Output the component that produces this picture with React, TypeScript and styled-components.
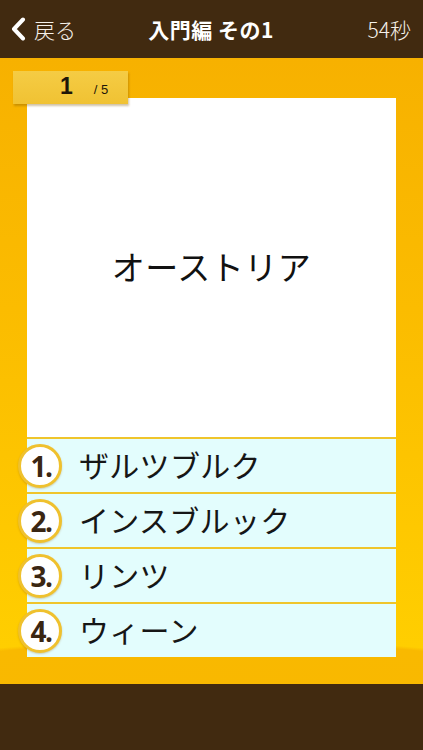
import styled, { createGlobalStyle } from "styled-components";

const GlobalStyle = createGlobalStyle`
  html, body {
    margin: 0;
    padding: 0;
  }
  body {
    font-family: "Noto Sans CJK JP", "Noto Sans", sans-serif;
  }
`

const Screen = styled.div`
  width: 423px;
  height: 750px;
  display: flex;
  flex-direction: column;
  overflow: hidden;
`

const Header = styled.header`
  height: 58px;
  flex-shrink: 0;
  background-color: #412a10;
  display: grid;
  grid-template-columns: 1fr auto 1fr;
  align-items: center;
  padding: 0 12px 0 11px;
  color: #fff;
`

const BackButton = styled.div`
  display: flex;
  align-items: center;
  gap: 8px;
  font-size: 21px;
  font-weight: 300;
  color: #f6f1ea;
`

const Title = styled.div`
  font-size: 21px;
  font-weight: 700;
  letter-spacing: 0.5px;
`

const Timer = styled.div`
  justify-self: end;
  font-size: 21px;
  font-weight: 300;
  color: #f6f1ea;
`

const Board = styled.main`
  flex: 1;
  display: flex;
  flex-direction: column;
  padding: 40px 27px 27px;
  background:
    radial-gradient(ellipse 560px 70px at 50% 100%, #f9b800 0%, #f9b900 60%, rgba(249, 185, 0, 0) 64%),
    linear-gradient(to bottom, #f7b100 0%, #fbbc00 40%, #fec800 75%, #ffd000 100%);
`

const Card = styled.section`
  position: relative;
  flex: 1;
  display: flex;
  flex-direction: column;
`

const Counter = styled.div`
  position: absolute;
  top: -27px;
  left: -14px;
  width: 115px;
  height: 33px;
  background: linear-gradient(to bottom, #f5cc44, #f0c233);
  box-shadow: 1px 2px 2px rgba(120, 80, 0, 0.35);
  display: flex;
  align-items: baseline;
  padding: 2px 0 0 47px;
  box-sizing: border-box;
  gap: 21px;
  color: #1e1608;
  font-family: "Liberation Sans", Arial, sans-serif;
  z-index: 1;
`

const Current = styled.span`
  font-size: 23px;
  font-weight: 700;
`

const Total = styled.span`
  font-size: 13px;
`

const Question = styled.div`
  flex: 1;
  background: #fff;
  display: flex;
  align-items: center;
  justify-content: center;
  padding-bottom: 4px;
  font-size: 33px;
  color: #111;
  letter-spacing: 0.5px;
`

const Option = styled.div`
  height: 53px;
  border-top: 2px solid #efc52c;
  background: #e3fdfd;
  display: flex;
  align-items: center;
  gap: 17px;
`

const Number = styled.div`
  width: 44px;
  height: 44px;
  margin-left: -9px;
  box-sizing: border-box;
  border-radius: 50%;
  background: #fff;
  border: 3px solid #efc12e;
  box-shadow: 0 1px 2px rgba(150, 100, 0, 0.3);
  display: flex;
  align-items: center;
  justify-content: center;
  padding-left: 2px;
  font-family: "Open Sans", sans-serif;
  font-weight: 700;
  font-size: 28px;
  color: #3a2612;
  letter-spacing: -1.5px;
  flex-shrink: 0;
`

const Answer = styled.span`
  font-size: 30px;
  color: #161616;
  letter-spacing: 0.3px;
  margin-bottom: 3px;
`

const Footer = styled.footer`
  height: 66px;
  flex-shrink: 0;
  background-color: #412a10;
`

const options = ["ザルツブルク", "インスブルック", "リンツ", "ウィーン"]

export default function App() {
  return (
    <Screen>
      <GlobalStyle />
      <Header>
        <BackButton>
          <svg width="15" height="24" viewBox="0 0 15 24">
            <path d="M12 2.5 L3 12 L12 21.5" fill="none" stroke="#fff" strokeWidth="4" strokeLinecap="round" strokeLinejoin="round" />
          </svg>
          戻る
        </BackButton>
        <Title>入門編 その1</Title>
        <Timer>54秒</Timer>
      </Header>
      <Board>
        <Card>
          <Counter>
            <Current>1</Current>
            <Total>/ 5</Total>
          </Counter>
          <Question>オーストリア</Question>
          {options.map((text, i) => (
            <Option key={text}>
              <Number>{i + 1}.</Number>
              <Answer>{text}</Answer>
            </Option>
          ))}
        </Card>
      </Board>
      <Footer />
    </Screen>
  )
}
